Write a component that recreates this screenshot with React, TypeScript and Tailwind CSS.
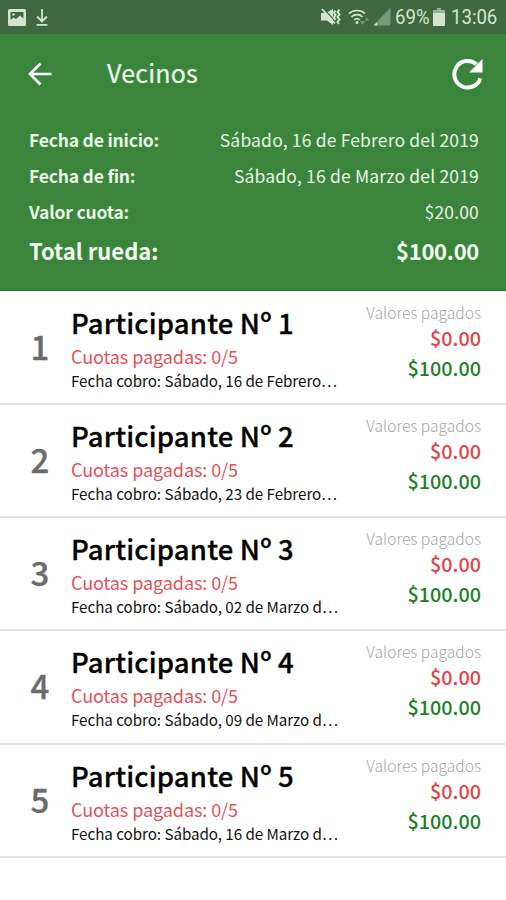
const participantes = [
  { id: 1, fecha: 'Sábado, 16 de Febrero…' },
  { id: 2, fecha: 'Sábado, 23 de Febrero…' },
  { id: 3, fecha: 'Sábado, 02 de Marzo d…' },
  { id: 4, fecha: 'Sábado, 09 de Marzo d…' },
  { id: 5, fecha: 'Sábado, 16 de Marzo d…' },
]

function StatusBar() {
  return (
    <div className="h-[34px] bg-[#40673f] flex items-center justify-between pl-2 pr-[9px] text-[#d3e5d1]">
      <div className="flex items-center gap-[10px]">
        <svg width="18" height="17" viewBox="0 0 18 17">
          <path
            fill="currentColor"
            fillRule="evenodd"
            d="M1.500 0h15a1.500 1.500 0 0 1 1.500 1.500v14a1.500 1.500 0 0 1-1.500 1.500h-15A1.500 1.500 0 0 1 0 15.500v-14A1.500 1.500 0 0 1 1.500 0zM2.500 3v8l3-2.500 2.500 1.500 4-3.500 3.500 3V3z"
          />
          <circle cx="5.500" cy="5.500" r="1.300" fill="currentColor" />
        </svg>
        <svg width="12" height="18" viewBox="0 0 12 18" fill="none" stroke="currentColor" strokeWidth="1.800">
          <path d="M6 1v12M1 8.500l5 5 5-5M.5 16.800h11" />
        </svg>
      </div>

      <div className="flex items-center">
        {/* muted */}
        <svg className="mr-[7px]" width="20" height="18" viewBox="0 0 20 18">
          <path fill="currentColor" d="M0 5h5l7-4v16l-6-4.500H0z" />
          <path d="M2.500 .5l13 14" stroke="#40673f" strokeWidth="1.200" />
          <path d="M1 1l13 14.500" stroke="currentColor" strokeWidth="1.800" />
          <path
            d="M14.500 2.500l-1.500 2 1.500 2.500-1.500 2.500 1.500 2.500M18.500 1.500l-2 2.500 2 2.500-2 2.500 2 2.500-2 2.500 1.500 2"
            stroke="currentColor"
            strokeWidth="2"
            fill="none"
          />
        </svg>
        {/* wifi */}
        <svg className="mr-[3px]" width="22" height="18" viewBox="0 0 22 18" fill="none" stroke="currentColor" strokeWidth="1.600">
          <path d="M1 5.500a12 12 0 0 1 16 0M3.500 8.800a8 8 0 0 1 11 0M6 12a4.500 4.500 0 0 1 6 0" />
          <circle cx="9" cy="14.500" r="1.500" fill="currentColor" stroke="none" />
          <path fill="currentColor" stroke="none" opacity=".4" d="M12 13h5l-2.500 4zM17 12.500l2-3.500 2 3.500z" />
        </svg>
        {/* signal */}
        <svg className="mr-[4px]" width="18" height="18" viewBox="0 0 18 18">
          <path fill="currentColor" opacity=".4" d="M17.500 0v17.500H5V12.500z" />
          <path fill="currentColor" d="M4.500 13.500v4h-4z" />
        </svg>
        <span className="w-[38px] font-[Roboto] text-[20px] leading-[36px] whitespace-nowrap">
          <span className="inline-block origin-left scale-x-[.93]">69%</span>
        </span>
        <svg className="mr-[6px]" width="12" height="18" viewBox="0 0 12 18">
          <path fill="currentColor" opacity=".6" d="M4 0h4v2h4v4H0V2h4z" />
          <path fill="currentColor" d="M0 5h12v12a1 1 0 0 1-1 1H1a1 1 0 0 1-1-1z" />
        </svg>
        <span className="w-[46px] font-[Roboto] text-[20px] leading-[36px] whitespace-nowrap">
          <span className="inline-block origin-left scale-x-[.93]">13:06</span>
        </span>
      </div>
    </div>
  )
}

function InfoRow({ label, value }: { label: string; value: string }) {
  return (
    <div className="h-9 flex justify-between text-[17.500px] leading-9 text-[#e8f6e6]">
      <span className="font-bold tracking-[-.2px]">{label}</span>
      <span className="tracking-[.17px]">{value}</span>
    </div>
  )
}

function Header() {
  return (
    <header className="h-[257px] bg-[#3a853b] border-b-2 border-[#28802c]">
      <div className="h-[79px] flex items-center pl-[28px] pr-[23px] text-white">
        <svg width="24" height="24" viewBox="0 0 24 24" fill="none" stroke="currentColor" strokeWidth="2.700">
          <path d="M23.500 12H2.500M12.500 1.500L2 12l10.500 10.500" />
        </svg>
        <h1 className="ml-[55px] pb-0.5 text-[25px] leading-[75px] tracking-[.2px] text-[#eefaec] [-webkit-text-stroke:.2px_#eefaec]">
          Vecinos
        </h1>
        <svg className="ml-auto" width="32" height="32" viewBox="0 0 32 32">
          <path d="M29.300 20.300A13.300 13.300 0 1 1 25.500 6.300" fill="none" stroke="currentColor" strokeWidth="4" />
          <path d="M31.500 1v13.500H18z" fill="currentColor" />
        </svg>
      </div>
      <div className="pt-[9px] pl-[29px] pr-[27px]">
        <InfoRow label="Fecha de inicio:" value="Sábado, 16 de Febrero del 2019" />
        <InfoRow label="Fecha de fin:" value="Sábado, 16 de Marzo del 2019" />
        <InfoRow label="Valor cuota:" value="$20.00" />
        <div className="flex justify-between text-[22px] leading-[40px] font-bold text-[#f2fbf0]">
          <span>Total rueda:</span>
          <span className="tracking-[-.3px]">$100.00</span>
        </div>
      </div>
    </header>
  )
}

function Participante({ id, fecha }: { id: number; fecha: string }) {
  return (
    <li className="h-[113.250px] flex border-b-2 border-[#e2e2e2] pt-2 pr-[25px]">
      <span className="w-[71px] pl-[30.500px] text-[33px] leading-[92px] font-medium text-[#6b6b6b] [-webkit-text-stroke:.3px_#6b6b6b]">
        {id}
      </span>
      <div className="whitespace-nowrap">
        <h2 className="text-[27.500px] leading-[44px] tracking-[.17px] font-medium text-black [-webkit-text-stroke:.3px_black]">
          Participante Nº {id}
        </h2>
        <p className="text-[18px] leading-6 tracking-[-.08px] text-[#e25358]">Cuotas pagadas: 0/5</p>
        <p className="text-[15.200px] leading-6 tracking-[-.05px] text-[#111]">Fecha cobro: {fecha}</p>
      </div>
      <div className="ml-auto text-right whitespace-nowrap">
        <p className="text-[15.600px] leading-6 font-light text-[#a5a5a5]">Valores pagados</p>
        <p className="text-[19.800px] leading-7 font-medium text-[#e04448]">$0.00</p>
        <p className="text-[19.800px] leading-[31px] font-medium text-[#1d7f28]">$100.00</p>
      </div>
    </li>
  )
}

export default function App() {
  return (
    <div className="w-[506px] h-[900px] overflow-hidden bg-white font-['Noto_Sans_CJK_SC','Noto_Sans',sans-serif]">
      <StatusBar />
      <Header />
      <ul className="pt-[.600px]">
        {participantes.map((p) => (
          <Participante key={p.id} id={p.id} fecha={p.fecha} />
        ))}
      </ul>
    </div>
  )
}
